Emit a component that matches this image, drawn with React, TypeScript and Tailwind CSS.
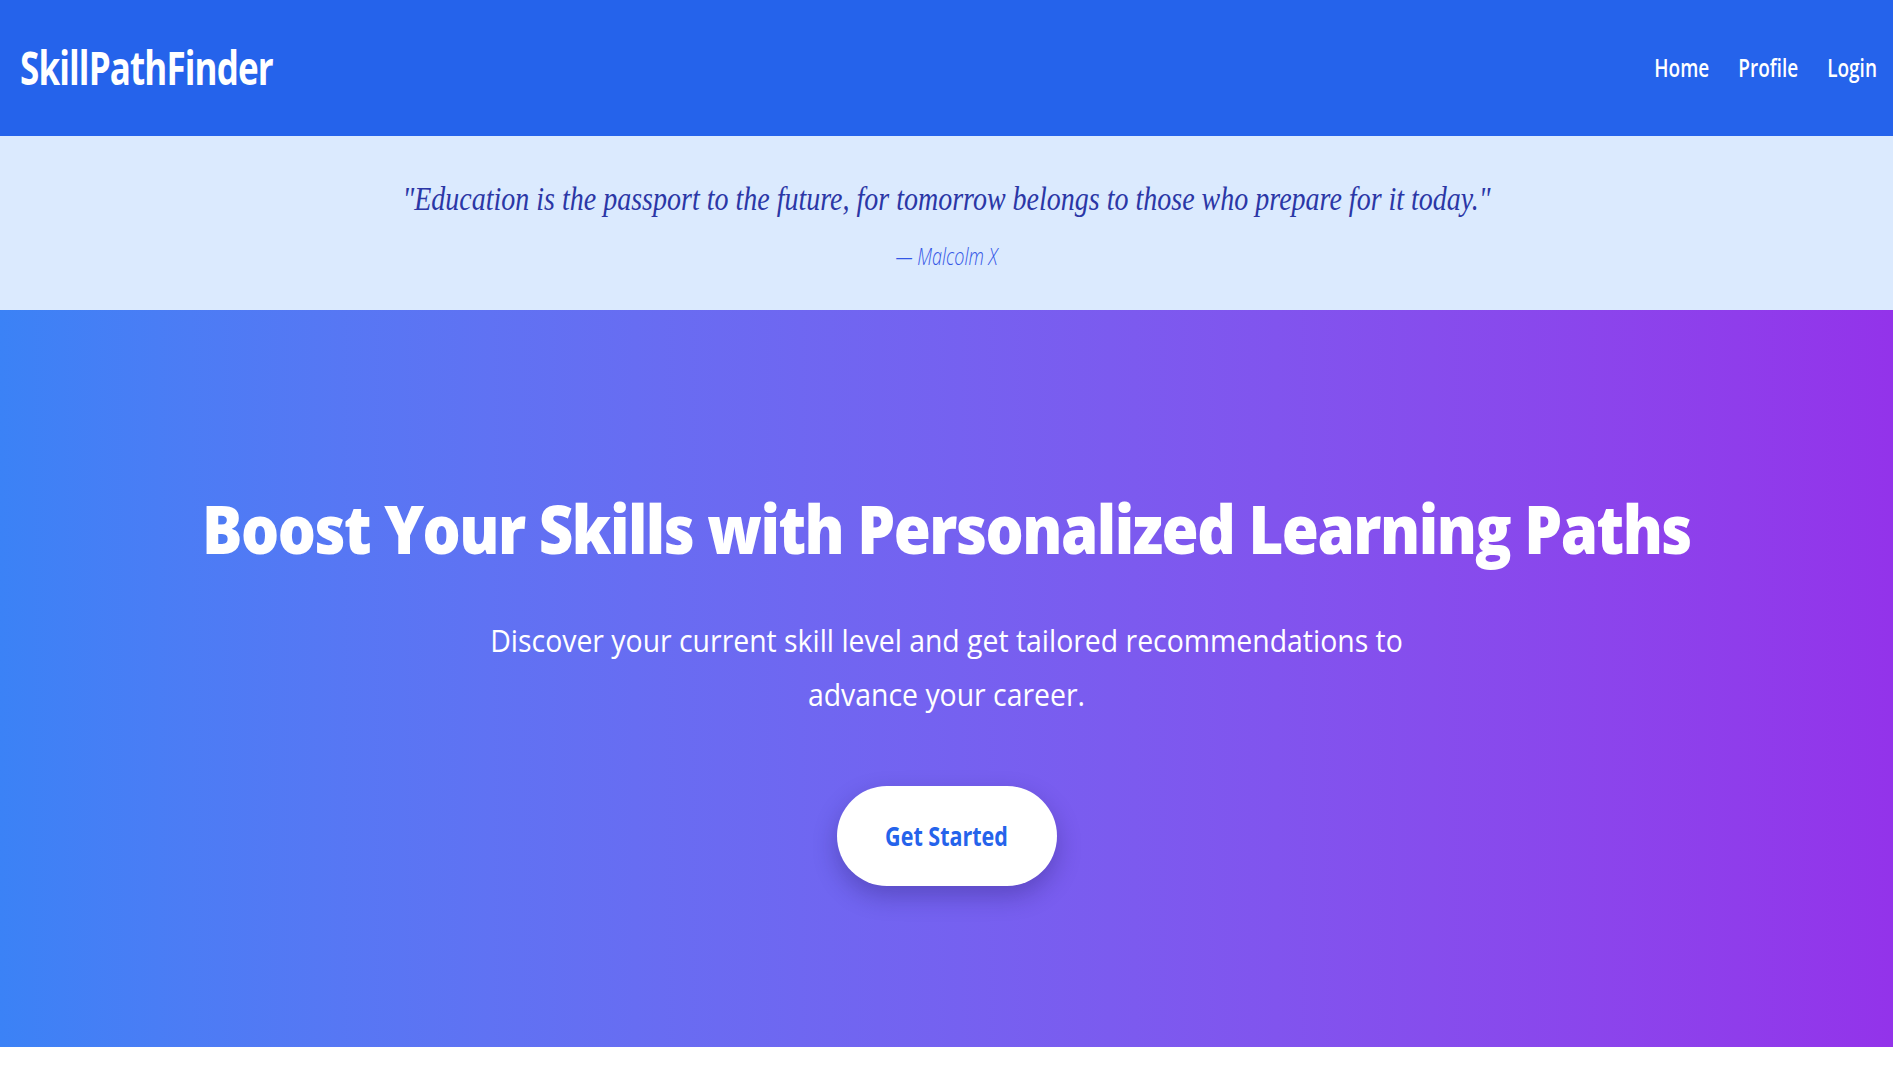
export default function App() {
  const navLinks = ['Home', 'Profile', 'Login'];

  return (
    <div className="min-h-screen bg-white font-['Open_Sans',sans-serif]">
      {/* Header */}
      <header className="h-[136px] bg-[#2563eb] flex items-center justify-between pl-5 pr-4">
        <span className="inline-block scale-y-[1.35] text-white text-[35px] font-bold tracking-tight">
          SkillPathFinder
        </span>
        <nav className="flex items-center gap-[29px]">
          {navLinks.map((link) => (
            <a key={link} href="#" className="inline-block scale-y-[1.3] text-white text-[19px] font-semibold">
              {link}
            </a>
          ))}
        </nav>
      </header>

      {/* Quote */}
      <section className="h-[174px] bg-[#dbeafe] pt-[43px] flex flex-col items-center">
        <p className="scale-y-[1.2] font-['Liberation_Serif',serif] italic text-[28px] leading-[40px] text-[#2b37a6]">
          "Education is the passport to the future, for tomorrow belongs to those who prepare for it today."
        </p>
        <p className="mt-[23px] scale-y-[1.3] italic font-light text-[18px] leading-[28px] text-[#3457e6]">
          — Malcolm X
        </p>
      </section>

      {/* Hero */}
      <section className="h-[737px] bg-gradient-to-r from-[#3b82f6] to-[#9333ea] pt-[186px] flex flex-col items-center text-center">
        <h1 className="scale-y-[1.12] text-white text-[60px] leading-[65px] font-extrabold tracking-tight whitespace-nowrap">
          Boost Your Skills with Personalized Learning Paths
        </h1>
        <p className="mt-[56px] scale-y-[1.08] max-w-[950px] text-white text-[28.4px] leading-[50px]">
          Discover your current skill level and get tailored recommendations to advance your career.
        </p>
        <button className="mt-[69px] w-[220px] h-[100px] rounded-full bg-white shadow-[0_10px_25px_rgba(30,20,90,0.3)]">
          <span className="inline-block scale-y-[1.25] text-[#2563eb] text-[21.5px] font-bold">Get Started</span>
        </button>
      </section>
    </div>
  );
}
